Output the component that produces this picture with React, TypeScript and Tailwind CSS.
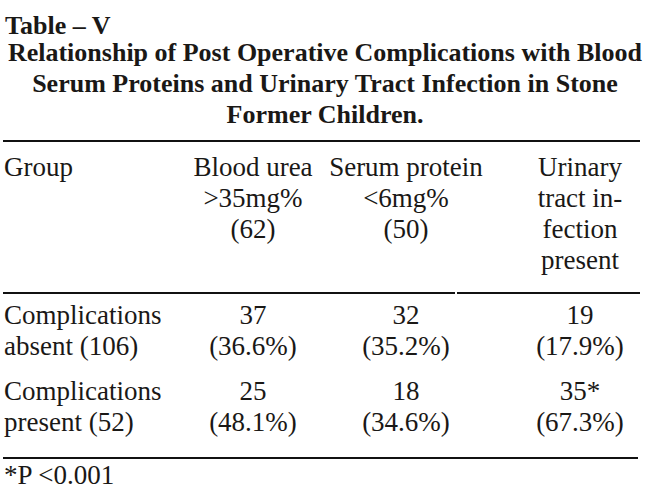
export default function App() {
  const rows = [
    { group: ["Complications", "absent (106)"], cells: [["37", "(36.6%)"], ["32", "(35.2%)"], ["19", "(17.9%)"]] },
    { group: ["Complications", "present (52)"], cells: [["25", "(48.1%)"], ["18", "(34.6%)"], ["35*", "(67.3%)"]] },
  ];

  return (
    <div className="w-[650px] h-[498px] overflow-hidden bg-white text-[#1a1816] font-['Liberation_Serif',serif]">
      {/* Caption */}
      <div className="pl-[5px] pt-[15px] text-[26px] font-bold leading-[22px]">Table – V</div>
      <div className="px-[4px] text-center text-[26px] font-bold leading-[31px]">
        <p className="whitespace-nowrap">Relationship of Post Operative Complications with Blood</p>
        <p className="whitespace-nowrap">Serum Proteins and Urinary Tract Infection in Stone</p>
        <p>Former Children.</p>
      </div>

      <div className="ml-[3px] mr-[10px] mt-[10px] h-[2px] bg-[#111]" />

      {/* Header */}
      <div className="grid grid-cols-[176px_146px_160px_1fr] pl-[4px] pr-[10px] pt-[10px] pb-[16px] text-[27px] leading-[31px]">
        <div>Group</div>
        <div className="text-center whitespace-nowrap">
          <p>Blood urea</p>
          <p>&gt;35mg%</p>
          <p>(62)</p>
        </div>
        <div className="text-center whitespace-nowrap">
          <p>Serum protein</p>
          <p>&lt;6mg%</p>
          <p>(50)</p>
        </div>
        <div className="pl-[34px] text-center whitespace-nowrap">
          <p>Urinary</p>
          <p>tract in-</p>
          <p>fection</p>
          <p>present</p>
        </div>
      </div>

      <div className="ml-[3px] mr-[10px] flex gap-[2px]">
        <div className="h-[2px] w-[452px] bg-[#111]" />
        <div className="h-[2px] flex-1 bg-[#111]" />
      </div>

      {/* Body */}
      <div className="flex flex-col gap-[14px] pl-[4px] pr-[10px] pt-[6px] pb-[19px] text-[27px] leading-[31px]">
        {rows.map((row) => (
          <div key={row.group[1]} className="grid grid-cols-[176px_146px_160px_1fr]">
            <div className="whitespace-nowrap">
              <p>{row.group[0]}</p>
              <p>{row.group[1]}</p>
            </div>
            {row.cells.map((cell, i) => (
              <div key={i} className={i === 2 ? "pl-[34px] text-center" : "text-center"}>
                <p>{cell[0]}</p>
                <p>{cell[1]}</p>
              </div>
            ))}
          </div>
        ))}
      </div>

      <div className="ml-[3px] mr-[12px] h-[2px] bg-[#111]" />

      <div className="pl-[4px] pt-[1px] text-[27px] leading-[31px]">*P &lt;0.001</div>
    </div>
  );
}
